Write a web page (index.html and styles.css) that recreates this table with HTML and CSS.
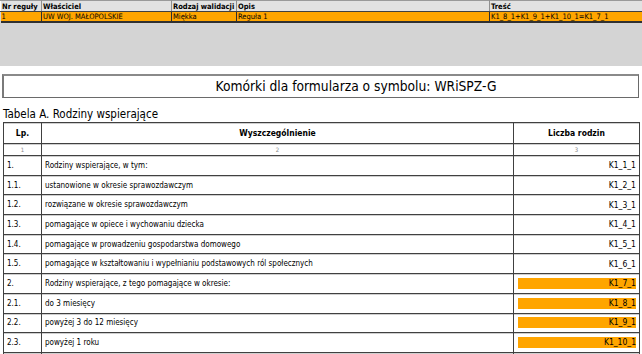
FILE: index.html
```html
<!DOCTYPE html>
<html>
<head>
<meta charset="utf-8">
<link rel="stylesheet" href="styles.css">
</head>
<body>
<div class="rules">
  <table class="rules-table">
    <colgroup><col class="c1"><col class="c2"><col class="c3"><col class="c4"><col class="c5"></colgroup>
    <thead>
      <tr><th>Nr reguły</th><th>Właściciel</th><th>Rodzaj walidacji</th><th>Opis</th><th>Treść</th></tr>
    </thead>
    <tbody>
      <tr class="sel"><td>1</td><td>UW WOJ. MAŁOPOLSKIE</td><td>Miękka</td><td>Reguła 1</td><td>K1_8_1+K1_9_1+K1_10_1=K1_7_1</td></tr>
    </tbody>
  </table>
  <div class="rules-empty"></div>
</div>
<div class="content">
  <div class="title">Komórki dla formularza o symbolu: WRiSPZ-G</div>
  <div class="caption">Tabela A. Rodziny wspierające</div>
  <table class="form">
    <colgroup><col class="f1"><col class="f2"><col class="f3"></colgroup>
    <thead>
      <tr class="head"><th>Lp.</th><th>Wyszczególnienie</th><th>Liczba rodzin</th></tr>
      <tr class="nums"><td>1</td><td>2</td><td>3</td></tr>
    </thead>
    <tbody>
      <tr><td>1.</td><td>Rodziny wspierające, w tym:</td><td class="v">K1_1_1</td></tr>
      <tr><td>1.1.</td><td>ustanowione w okresie sprawozdawczym</td><td class="v">K1_2_1</td></tr>
      <tr><td>1.2.</td><td>rozwiązane w okresie sprawozdawczym</td><td class="v">K1_3_1</td></tr>
      <tr><td>1.3.</td><td>pomagające w opiece i wychowaniu dziecka</td><td class="v">K1_4_1</td></tr>
      <tr><td>1.4.</td><td>pomagające w prowadzeniu gospodarstwa domowego</td><td class="v">K1_5_1</td></tr>
      <tr><td>1.5.</td><td>pomagające w kształtowaniu i wypełnianiu podstawowych ról społecznych</td><td class="v">K1_6_1</td></tr>
      <tr><td>2.</td><td>Rodziny wspierające, z tego pomagające w okresie:</td><td class="v"><span class="hl">K1_7_1</span></td></tr>
      <tr><td>2.1.</td><td>do 3 miesięcy</td><td class="v"><span class="hl">K1_8_1</span></td></tr>
      <tr><td>2.2.</td><td>powyżej 3 do 12 miesięcy</td><td class="v"><span class="hl">K1_9_1</span></td></tr>
      <tr><td>2.3.</td><td>powyżej 1 roku</td><td class="v"><span class="hl">K1_10_1</span></td></tr>
      <tr><td>&nbsp;</td><td>&nbsp;</td><td class="v">&nbsp;</td></tr>
    </tbody>
  </table>
</div>
</body>
</html>
```
FILE: styles.css
```css
html, body {
  margin: 0;
  padding: 0;
  background: #ffffff;
  font-family: "DejaVu Sans Condensed", "DejaVu Sans", "Liberation Sans", sans-serif;
  color: #000;
  overflow: hidden;
}

.rules {
  background: #d4d4d4;
}

.rules-table {
  width: 642px;
  border-collapse: collapse;
  table-layout: fixed;
  font-size: 7.5px;
  line-height: 9px;
}

.c1 { width: 41px; }
.c2 { width: 130px; }
.c3 { width: 65px; }
.c4 { width: 253px; }
.c5 { width: 153px; }

.rules-table th {
  background: #e2e2e2;
  text-align: left;
  font-weight: bold;
  padding: 1px 1px 0 1px;
  height: 9px;
  border-top: 1px solid #9a9a9a;
  border-bottom: 1px solid #404040;
  border-left: 1px solid #ffffff;
  border-right: 1px solid #909090;
  white-space: nowrap;
  overflow: hidden;
}

.rules-table td {
  background: #ffa500;
  padding: 0 1px;
  height: 9px;
  border-bottom: 2px solid #303030;
  border-right: 1px solid #303030;
  white-space: nowrap;
  overflow: hidden;
}

.rules-empty {
  height: 43px;
}

.content {
  padding: 8px 3px 0 2px;
}

.title {
  border: 1px solid #6a6a6a;
  border-top: 2px solid #8a8a8a;
  border-left: 2px solid #7a7a7a;
  height: 21px;
  line-height: 21px;
  text-align: center;
  font-size: 13.7px;
  padding-left: 70px;
}

.caption {
  font-size: 11.5px;
  margin: 9px 0 1px 1px;
  line-height: 14px;
}

.form {
  width: 636px;
  margin-left: 1px;
  border-collapse: collapse;
  table-layout: fixed;
  font-size: 8px;
}

.f1 { width: 38px; }
.f2 { width: 472px; }
.f3 { width: 126px; }

.form th, .form td {
  border: 1px solid #404040;
  box-shadow: inset 0 1px 0 #cfcfcf;
  padding: 0 3px;
  white-space: nowrap;
  overflow: hidden;
}

.form th {
  height: 20px;
  font-weight: bold;
  font-size: 8.5px;
  text-align: center;
}

.form .nums td {
  height: 12px;
  font-size: 6px;
  color: #888;
  text-align: center;
  line-height: 8px;
  vertical-align: top;
  padding-top: 2px;
  box-sizing: border-box;
}

.form tbody td {
  height: 18.7px;
  text-align: left;
}

.form tbody td.v {
  text-align: right;
  padding-right: 3px;
  font-size: 8.5px;
}

.hl {
  display: block;
  background: #ffa500;
  height: 11px;
  line-height: 11px;
  margin-left: 1px;
}
```
